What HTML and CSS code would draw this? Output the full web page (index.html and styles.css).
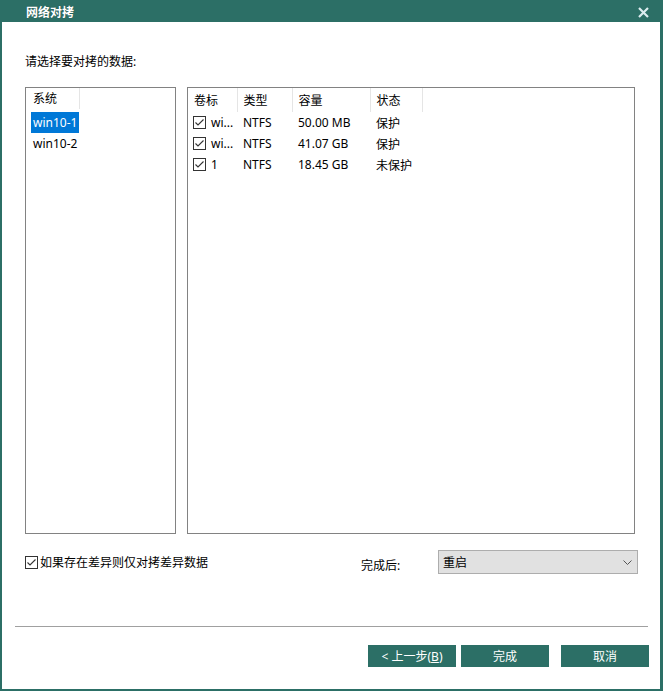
FILE: index.html
```html
<!DOCTYPE html>
<html lang="zh-CN">
<head>
    <meta charset="UTF-8">
    <title>网络对拷</title>
    <link rel="stylesheet" href="styles.css">
</head>
<body>
    <div class="window">
        <div class="titlebar">
            <span class="title">网络对拷</span>
            <svg class="close" width="11" height="11" viewBox="0 0 11 11">
                <path d="M1 1 L10 10 M10 1 L1 10" stroke="#dcecef" stroke-width="2.2"/>
            </svg>
        </div>
        <div class="content">
            <div class="prompt">请选择要对拷的数据:</div>
            <div class="panels">
                <div class="panel systems">
                    <div class="list-head">系统</div>
                    <div class="list-item selected">win10-1</div>
                    <div class="list-item">win10-2</div>
                </div>
                <div class="panel volumes">
                    <table class="grid">
                        <colgroup>
                            <col style="width:49px">
                            <col style="width:55px">
                            <col style="width:78px">
                            <col style="width:52px">
                            <col>
                        </colgroup>
                        <thead>
                            <tr>
                                <th>卷标</th>
                                <th>类型</th>
                                <th>容量</th>
                                <th>状态</th>
                                <th class="filler"></th>
                            </tr>
                        </thead>
                        <tbody>
                            <tr>
                                <td class="label-cell"><span class="check"><svg width="13" height="13" viewBox="0 0 13 13"><rect x="0.5" y="0.5" width="12" height="12" fill="#fff" stroke="#333"/><path d="M2.5 6.5 L5 9 L10.5 3.5" fill="none" stroke="#333" stroke-width="1.1"/></svg></span>wi...</td>
                                <td>NTFS</td>
                                <td>50.00 MB</td>
                                <td>保护</td>
                                <td></td>
                            </tr>
                            <tr>
                                <td class="label-cell"><span class="check"><svg width="13" height="13" viewBox="0 0 13 13"><rect x="0.5" y="0.5" width="12" height="12" fill="#fff" stroke="#333"/><path d="M2.5 6.5 L5 9 L10.5 3.5" fill="none" stroke="#333" stroke-width="1.1"/></svg></span>wi...</td>
                                <td>NTFS</td>
                                <td>41.07 GB</td>
                                <td>保护</td>
                                <td></td>
                            </tr>
                            <tr>
                                <td class="label-cell"><span class="check"><svg width="13" height="13" viewBox="0 0 13 13"><rect x="0.5" y="0.5" width="12" height="12" fill="#fff" stroke="#333"/><path d="M2.5 6.5 L5 9 L10.5 3.5" fill="none" stroke="#333" stroke-width="1.1"/></svg></span>1</td>
                                <td>NTFS</td>
                                <td>18.45 GB</td>
                                <td>未保护</td>
                                <td></td>
                            </tr>
                        </tbody>
                    </table>
                </div>
            </div>
            <div class="options">
                <label class="diff-only">
                    <span class="check"><svg width="13" height="13" viewBox="0 0 13 13"><rect x="0.5" y="0.5" width="12" height="12" fill="#fff" stroke="#333"/><path d="M2.5 6.5 L5 9 L10.5 3.5" fill="none" stroke="#333" stroke-width="1.1"/></svg></span>如果存在差异则仅对拷差异数据
                </label>
                <span class="after-label">完成后:</span>
                <div class="select">
                    <span>重启</span>
                    <svg width="9" height="5" viewBox="0 0 9 5"><path d="M0.5 0.5 L4.5 4.5 L8.5 0.5" fill="none" stroke="#555"/></svg>
                </div>
            </div>
            <div class="separator"></div>
            <div class="buttons">
                <button class="btn">&lt; 上一步(<u>B</u>)</button>
                <button class="btn">完成</button>
                <button class="btn cancel">取消</button>
            </div>
        </div>
    </div>
</body>
</html>
```

FILE: styles.css
```css
body {
    margin: 0;
    padding: 0;
    font-family: "Noto Sans", "Noto Sans CJK SC", sans-serif;
    font-size: 12px;
    color: #000;
    background-color: #fff;
}

.window {
    width: 663px;
    height: 691px;
    box-sizing: border-box;
    border-left: 2px solid #2c6f66;
    border-right: 3px solid #2c6f66;
    border-bottom: 2px solid #2c6f66;
    display: flex;
    flex-direction: column;
}

.titlebar {
    height: 22px;
    margin: 0 -3px 0 -2px;
    background-color: #2c6f66;
    display: flex;
    align-items: center;
    justify-content: space-between;
    padding: 0 14px 0 26px;
}

.title {
    color: #fff;
    font-weight: bold;
    font-family: "Noto Sans CJK SC", sans-serif;
    font-size: 12px;
    text-shadow: 0 0 1px rgba(0, 0, 0, 0.4);
}

.close {
    margin-top: 2px;
}

.content {
    flex: 1;
    padding: 0 0 0 23px;
    display: flex;
    flex-direction: column;
}

.prompt {
    margin-top: 31px;
    height: 18px;
    line-height: 18px;
}

.panels {
    margin-top: 16px;
    display: flex;
    gap: 11px;
    height: 447px;
}

.panel {
    box-sizing: border-box;
    border: 1px solid #828282;
    height: 100%;
}

.systems {
    width: 151px;
    padding: 0 0 0 5px;
}

.list-head {
    width: 46px;
    height: 21px;
    line-height: 21px;
    padding-left: 2px;
    border-right: 1px solid #e5e5e5;
    margin-bottom: 3px;
}

.list-item {
    width: 46px;
    height: 21px;
    line-height: 21px;
    padding-left: 2px;
}

.list-item.selected {
    background-color: #0078d7;
    color: #fff;
}

.volumes {
    width: 448px;
}

.grid {
    border-collapse: collapse;
    table-layout: fixed;
    width: 100%;
}

.grid th {
    height: 21px;
    padding: 0 0 0 6px;
    font-weight: normal;
    text-align: left;
    border-right: 1px solid #e5e5e5;
}

.grid th.filler {
    border-right: none;
}

.grid thead tr {
    height: 24px;
}

.grid td {
    height: 21px;
    padding: 0 0 0 6px;
    white-space: nowrap;
    overflow: hidden;
}

.grid td.label-cell {
    padding-left: 5px;
}

.check {
    display: inline-flex;
    vertical-align: -2px;
    margin-right: 5px;
}

.options {
    margin-top: 16px;
    display: flex;
    align-items: center;
    height: 24px;
}

.diff-only {
    display: flex;
    align-items: center;
    width: 336px;
}

.diff-only .check {
    margin-right: 2px;
}

.after-label {
    margin-top: 6px;
    width: 77px;
}

.select {
    box-sizing: border-box;
    width: 200px;
    height: 24px;
    border: 1px solid #adadad;
    background-color: #e1e1e1;
    display: flex;
    align-items: center;
    justify-content: space-between;
    padding: 0 5px 0 4px;
}

.separator {
    margin: 52px 0 0 -10px;
    width: 633px;
    height: 1px;
    background-color: #a0a0a0;
}

.buttons {
    margin-top: 18px;
    display: flex;
    padding-left: 343px;
}

.btn {
    width: 88px;
    height: 22px;
    margin-right: 5px;
    padding: 0;
    border: none;
    background-color: #2c6f66;
    color: #fff;
    font-family: "Noto Sans", "Noto Sans CJK SC", sans-serif;
    font-size: 12px;
    cursor: pointer;
}

.btn.cancel {
    margin-left: 7px;
}
```
